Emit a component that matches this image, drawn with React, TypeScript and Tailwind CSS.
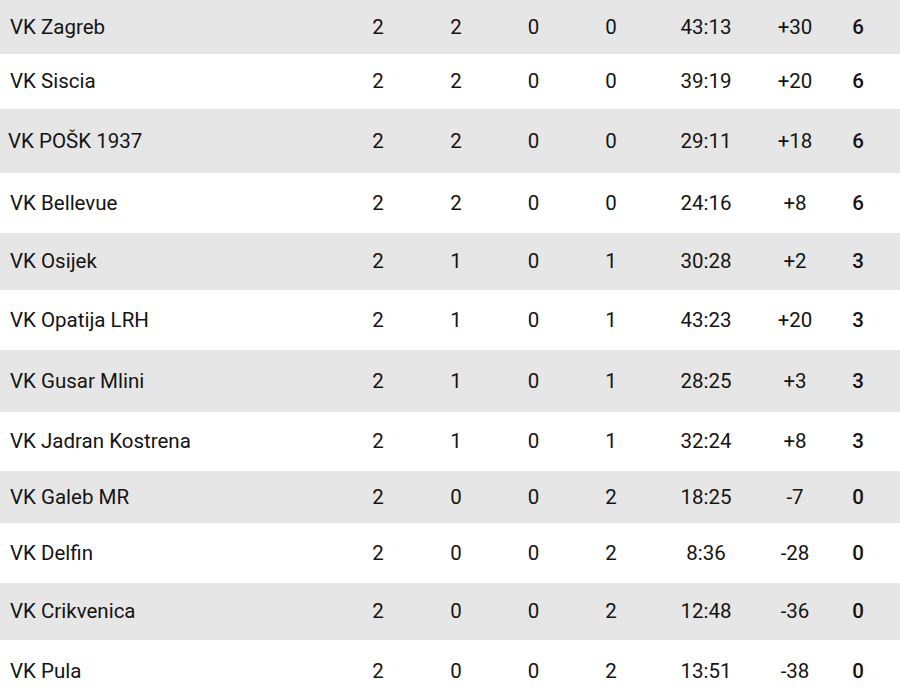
const rows = [
  { name: 'VK Zagreb', p: 2, w: 2, d: 0, l: 0, score: '43:13', diff: '+30', pts: 6, h: 54 },
  { name: 'VK Siscia', p: 2, w: 2, d: 0, l: 0, score: '39:19', diff: '+20', pts: 6, h: 55 },
  { name: 'VK POŠK 1937', p: 2, w: 2, d: 0, l: 0, score: '29:11', diff: '+18', pts: 6, h: 64, shift: true },
  { name: 'VK Bellevue', p: 2, w: 2, d: 0, l: 0, score: '24:16', diff: '+8', pts: 6, h: 60 },
  { name: 'VK Osijek', p: 2, w: 1, d: 0, l: 1, score: '30:28', diff: '+2', pts: 3, h: 57 },
  { name: 'VK Opatija LRH', p: 2, w: 1, d: 0, l: 1, score: '43:23', diff: '+20', pts: 3, h: 60 },
  { name: 'VK Gusar Mlini', p: 2, w: 1, d: 0, l: 1, score: '28:25', diff: '+3', pts: 3, h: 62 },
  { name: 'VK Jadran Kostrena', p: 2, w: 1, d: 0, l: 1, score: '32:24', diff: '+8', pts: 3, h: 59 },
  { name: 'VK Galeb MR', p: 2, w: 0, d: 0, l: 2, score: '18:25', diff: '-7', pts: 0, h: 52 },
  { name: 'VK Delfin', p: 2, w: 0, d: 0, l: 2, score: '8:36', diff: '-28', pts: 0, h: 60 },
  { name: 'VK Crikvenica', p: 2, w: 0, d: 0, l: 2, score: '12:48', diff: '-36', pts: 0, h: 57 },
  { name: 'VK Pula', p: 2, w: 0, d: 0, l: 2, score: '13:51', diff: '-38', pts: 0, h: 62 },
]

export default function App() {
  return (
    <div className="h-[689px] w-[900px] overflow-hidden bg-white text-[20.5px] text-[#141414] font-['Roboto',sans-serif]">
      {rows.map((r, i) => (
        <div
          key={r.name}
          style={{ height: r.h }}
          className={`flex items-center ${i % 2 === 0 ? 'bg-[#e6e6e6]' : 'bg-white'}`}
        >
          <div className={`w-[339px] ${r.shift ? 'pl-[8px]' : 'pl-[10px]'}`}>{r.name}</div>
          <div className="w-[78px] text-center">{r.p}</div>
          <div className="w-[78px] text-center">{r.w}</div>
          <div className="w-[77px] text-center">{r.d}</div>
          <div className="w-[78px] text-center">{r.l}</div>
          <div className="w-[112px] text-center">{r.score}</div>
          <div className="w-[66px] text-center">{r.diff}</div>
          <div className="w-[60px] text-center font-medium">{r.pts}</div>
        </div>
      ))}
    </div>
  )
}
